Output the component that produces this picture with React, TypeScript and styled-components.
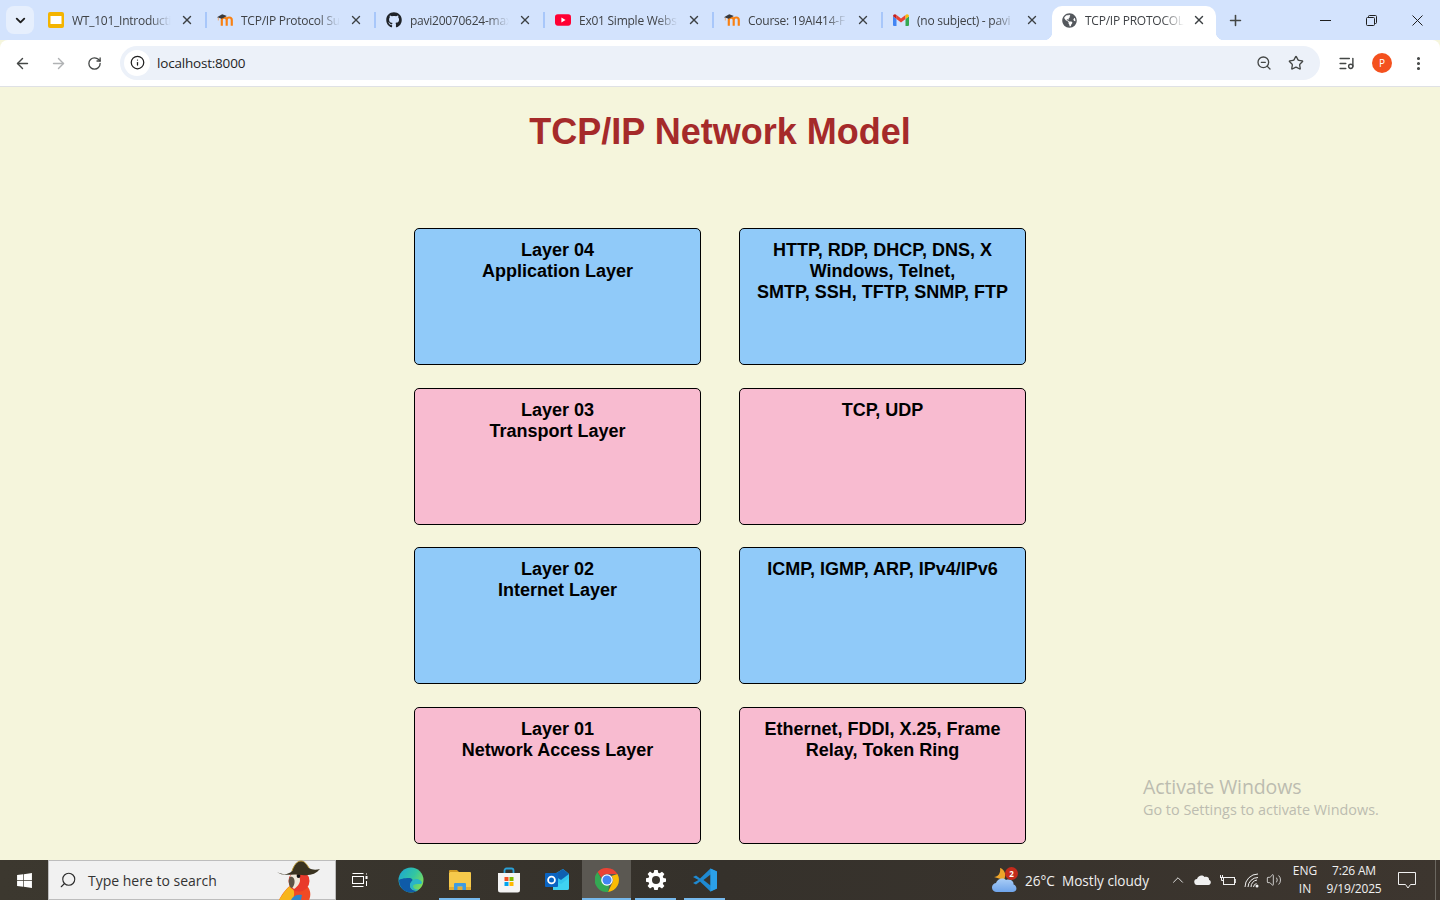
import styled, { createGlobalStyle } from "styled-components";
import {
  ArrowLeft, ArrowRight, ChevronDown, ChevronUp, Info, ListMusic, MoreVertical,
  Plus, RotateCw, Search, Star, Volume2, X, ZoomOut,
} from "lucide-react";
import { FaGithub, FaGlobeAmericas, FaWindows } from "react-icons/fa";
import { ReactNode } from "react";

const GlobalStyle = createGlobalStyle`
  html, body {
    margin: 0;
    padding: 0;
    height: 100%;
    overflow: hidden;
  }
`;

const Screen = styled.div`
  width: 1440px;
  height: 900px;
  display: flex;
  flex-direction: column;
  position: relative;
  overflow: hidden;
  font-family: "Open Sans", "Noto Sans", sans-serif;
  background: #f5f5dc;
`;

/* chrome tab strip */
const TabStrip = styled.div`
  height: 40px;
  flex: none;
  background: #d3e3fd;
  display: flex;
  align-items: flex-start;
  padding: 6px 0 0 6px;
  box-sizing: border-box;
`;

const TabSearch = styled.div`
  width: 28px;
  height: 28px;
  margin-right: 3px;
  border-radius: 8px;
  background: #e6effd;
  display: flex;
  align-items: center;
  justify-content: center;
  color: #1f1f1f;
  flex: none;
`;

const Tab = styled.div<{ $active?: boolean; $last?: boolean }>`
  width: ${(p) => (p.$active ? "164px" : "169px")};
  margin-left: ${(p) => (p.$active ? "1px" : "0")};
  height: 34px;
  flex: none;
  box-sizing: border-box;
  position: relative;
  display: flex;
  align-items: center;
  padding: 0 0 6px ${(p) => (p.$active ? "9px" : "11px")};
  background: ${(p) => (p.$active ? "#fff" : "transparent")};
  border-radius: 10px 10px 0 0;
  color: #3c4043;

  ${(p) =>
    !p.$active && !p.$last
      ? `&::after {
    content: "";
    position: absolute;
    right: -1px;
    top: 6px;
    width: 2px;
    height: 16px;
    background: #a8c7fa;
  }`
      : ""}

  ${(p) =>
    p.$active
      ? `&::before, &::after {
    content: "";
    position: absolute;
    bottom: 0;
    width: 8px;
    height: 8px;
  }
  &::before {
    left: -8px;
    background: radial-gradient(circle at 0 0, #d3e3fd 8px, #fff 8.5px);
  }
  &::after {
    right: -8px;
    background: radial-gradient(circle at 100% 0, #d3e3fd 8px, #fff 8.5px);
  }`
      : ""}
`;

const TabIcon = styled.span`
  width: 16px;
  height: 16px;
  flex: none;
  display: flex;
  align-items: center;
  justify-content: center;
`;

const TabTitle = styled.span`
  width: 99px;
  margin-left: 8px;
  font-size: 12px;
  letter-spacing: -0.25px;
  white-space: nowrap;
  overflow: hidden;
  color: #3f4246;
  -webkit-mask-image: linear-gradient(90deg, #000 78%, transparent 100%);
  mask-image: linear-gradient(90deg, #000 78%, transparent 100%);
`;

const TabClose = styled.span<{ $active?: boolean }>`
  margin-left: ${(p) => (p.$active ? "7px" : "8px")};
  width: 16px;
  height: 16px;
  flex: none;
  display: flex;
  align-items: center;
  justify-content: center;
  color: #3c4043;
`;

const NewTab = styled.div`
  width: 28px;
  height: 28px;
  margin-left: 5px;
  flex: none;
  display: flex;
  align-items: center;
  justify-content: center;
  color: #444746;
`;

const WindowButtons = styled.div`
  margin-left: auto;
  margin-top: -6px;
  display: flex;
  color: #1f1f1f;
`;

const WindowButton = styled.div`
  width: 46px;
  height: 40px;
  display: flex;
  align-items: center;
  justify-content: center;
`;

/* address bar */
const Toolbar = styled.div`
  height: 47px;
  flex: none;
  box-sizing: border-box;
  background: #fff;
  border-bottom: 1px solid #dfe1e5;
  border-radius: 8px 8px 0 0;
  display: flex;
  align-items: center;
  color: #444746;
`;

const ToolbarButton = styled.div<{ $muted?: boolean }>`
  width: 36px;
  height: 34px;
  flex: none;
  display: flex;
  align-items: center;
  justify-content: center;
  color: ${(p) => (p.$muted ? "#b0b2b4" : "#444746")};
`;

const NavGroup = styled.div`
  display: flex;
  padding-left: 4px;
  margin-right: 8px;
`;

const Omnibox = styled.div`
  width: 1200px;
  height: 34px;
  flex: none;
  border-radius: 17px;
  background: #ecf1f9;
  display: flex;
  align-items: center;
  padding: 0 8px 0 4px;
  box-sizing: border-box;
  margin-bottom: 1px;
`;

const InfoChip = styled.div`
  width: 26px;
  height: 26px;
  border-radius: 50%;
  background: #fff;
  display: flex;
  align-items: center;
  justify-content: center;
  color: #1f1f1f;
  flex: none;
`;

const UrlText = styled.span`
  margin-left: 7px;
  font-size: 13.5px;
  letter-spacing: -0.2px;
  color: #1f1f1f;
  flex: 1;
`;

const OmniAction = styled.div`
  width: 32px;
  height: 26px;
  display: flex;
  align-items: center;
  justify-content: center;
  color: #444746;
`;

const ProfileDot = styled.div`
  width: 20px;
  height: 20px;
  border-radius: 50%;
  background: #f4511e;
  color: #fff;
  font-size: 10px;
  display: flex;
  align-items: center;
  justify-content: center;
`;

const RightTools = styled.div`
  display: flex;
  margin-left: 8px;
`;

/* the page itself */
const Page = styled.main`
  flex: 1;
  min-height: 0;
  background: #f5f5dc;
  display: flex;
  flex-direction: column;
  align-items: center;
`;

const Title = styled.h1`
  margin: 24px 0 0;
  font-family: "Liberation Sans", Arial, sans-serif;
  font-size: 36px;
  line-height: 41px;
  font-weight: 700;
  color: #a52a2a;
`;

const LayerGrid = styled.div`
  margin-top: 76px;
  display: grid;
  grid-template-columns: 287px 287px;
  grid-auto-rows: 137px;
  column-gap: 38px;
  row-gap: 22.6px;
`;

const LayerBox = styled.div<{ $tone: "blue" | "pink" }>`
  box-sizing: border-box;
  border: 1px solid #000;
  border-radius: 5px;
  background: ${(p) => (p.$tone === "blue" ? "#90caf9" : "#f8bbd0")};
  padding: 11px 10px 10px;
  text-align: center;
  font-family: "Liberation Sans", Arial, sans-serif;
  font-size: 18px;
  font-weight: 700;
  line-height: 21px;
  color: #000;
`;

const Watermark = styled.div`
  position: absolute;
  left: 1143px;
  top: 774px;
  color: #bcbcb0;
  font-family: "Open Sans", sans-serif;
  pointer-events: none;
`;

const WatermarkTitle = styled.div`
  font-size: 19.5px;
  line-height: 25px;
  letter-spacing: -0.1px;
`;

const WatermarkText = styled.div`
  font-size: 14.4px;
  line-height: 22px;
`;

/* windows taskbar */
const Taskbar = styled.footer`
  height: 40px;
  flex: none;
  background: linear-gradient(90deg, #3c382f 0%, #35312b 50%, #3d362f 100%);
  display: flex;
  align-items: stretch;
  color: #f2f2f2;
`;

const StartButton = styled.div`
  width: 48px;
  flex: none;
  display: flex;
  align-items: center;
  justify-content: center;
  color: #fff;
`;

const SearchBox = styled.div`
  width: 288px;
  flex: none;
  box-sizing: border-box;
  background: #f1f1f1;
  border: 1px solid #bdbdbd;
  display: flex;
  align-items: center;
  padding-left: 10px;
  position: relative;
  color: #2b2b2b;
`;

const SearchText = styled.span`
  margin-left: 11px;
  font-size: 14px;
  color: #333;
`;

const Mascot = styled.svg`
  position: absolute;
  right: 14px;
  top: -1px;
`;

const TaskSlot = styled.div<{ $open?: boolean; $active?: boolean }>`
  width: 49px;
  flex: none;
  display: flex;
  align-items: center;
  justify-content: center;
  position: relative;
  background: ${(p) => (p.$active ? "#5b5852" : "transparent")};

  ${(p) =>
    p.$open
      ? `&::after {
    content: "";
    position: absolute;
    left: ${p.$active ? "0" : "4px"};
    right: ${p.$active ? "0" : "4px"};
    bottom: 0;
    height: 2px;
    background: #76b9ed;
  }`
      : ""}
`;

const TaskSlots = styled.div`
  display: flex;
  margin-left: 1px;
`;

const Tray = styled.div`
  margin-left: auto;
  display: flex;
  align-items: center;
  font-size: 13px;
  color: #f0f0f0;
  height: 100%;
`;

const WeatherIcon = styled.div`
  position: relative;
  width: 26px;
  height: 26px;
  flex: none;
  margin-right: 7px;
`;

const WeatherBadge = styled.span`
  position: absolute;
  right: 0;
  top: 0;
  width: 13px;
  height: 13px;
  border-radius: 50%;
  background: #c42b1c;
  color: #fff;
  font-size: 8px;
  line-height: 13px;
  text-align: center;
  font-weight: 700;
`;

const WeatherText = styled.span`
  white-space: pre;
  font-size: 13.6px;
`;

const TrayIcons = styled.div`
  display: flex;
  align-items: center;
  margin: 0 4px 0 19px;
  gap: 4.5px;
`;

const TrayIcon = styled.span`
  width: 20px;
  height: 20px;
  display: flex;
  align-items: center;
  justify-content: center;
  color: #f0f0f0;

  &:last-child {
    margin-left: -2px;
  }
`;

const LangBlock = styled.div`
  width: 34px;
  text-align: center;
  font-size: 12px;
  line-height: 18px;
`;

const ClockBlock = styled.div`
  width: 64px;
  text-align: center;
  font-size: 12px;
  line-height: 18px;
  letter-spacing: -0.2px;
`;

const NoticeButton = styled.div`
  width: 40px;
  margin: 0 8px 0 1px;
  height: 100%;
  display: flex;
  align-items: center;
  justify-content: center;
`;

const DesktopEdge = styled.div`
  width: 5px;
  box-sizing: border-box;
  height: 100%;
  flex: none;
  border-left: 1px solid #6b6760;
`;

/* small drawn logos */
const SlidesIcon = () => (
  <svg width="16" height="16" viewBox="0 0 16 16">
    <rect width="16" height="16" rx="2" fill="#f4b400" />
    <rect x="2.5" y="4" width="11" height="8" fill="#fff" />
  </svg>
);

const MoodleIcon = () => (
  <svg width="17" height="12" viewBox="0 0 17 12">
    <path
      d="M5.1 12V6a2.6 2.600 0 0 1 5.200 0V12M10.300 6a2.600 2.600 0 0 1 5.400 0V12"
      fill="none"
      stroke="#f98012"
      strokeWidth="2.300"
    />
    <path d="M0 3.200 5.500 0 10.500 1.800 5 4.800Z" fill="#3a3a3c" />
    <path d="M1.400 3.600V6.500" stroke="#f3a566" strokeWidth="1" />
  </svg>
);

const YoutubeIcon = () => (
  <svg width="17" height="12" viewBox="0 0 17 12">
    <rect width="17" height="12" rx="3" fill="#ff0033" />
    <path d="M6.800 3.400 11.200 6 6.800 8.600Z" fill="#fff" />
  </svg>
);

const GmailIcon = () => (
  <svg width="16" height="12" viewBox="0 0 16 12">
    <path d="M0 2.200V11a1 1 0 0 0 1 1h2.500V5Z" fill="#4285f4" />
    <path d="M16 2.200V11a1 1 0 0 1-1 1h-2.500V5Z" fill="#34a853" />
    <path d="M3.500 5V1L8 4.400 12.500 1v4L8 8.400Z" fill="#ea4335" />
    <path d="M0 2.200C0 .4 2-.6 3.500 1v4Z" fill="#c5221f" />
    <path d="M16 2.200c0-1.800-2-2.800-3.500-1.200v4Z" fill="#fbbc04" />
  </svg>
);

const Parrot = () => (
  <Mascot width="44" height="40" viewBox="0 0 44 40">
    <path d="M2 40C6 32 11 27 15 24L30 26C34 30 34 36 32 40Z" fill="#f04a25" />
    <path d="M2 40C6 33 10 28 14 25C18 30 18 36 15 40Z" fill="#f7b51d" />
    <path d="M14 40C16 36 20 34 25 35L24 40Z" fill="#2f86c9" />
    <circle cx="22" cy="21" r="10.500" fill="#e93a2b" />
    <path d="M15 13C20 13 23 16 23 20C23 24 20 27 17 29C13 26 11 18 15 13Z" fill="#efe8d9" />
    <path d="M13 17C16 16 18 19 17.500 23C17 26 15.500 28 14 28C11.500 25 11 20 13 17Z" fill="#5d5446" />
    <circle cx="21.500" cy="16" r="1.900" fill="#111" />
    <path
      d="M0 12C6 15 11 15 15 11C17 5 20 1 24 1C28 1 30 5 32 8C35 10 39 10 43 9C39 14 33 16 25 15C15 13 6 17 0 12Z"
      fill="#3a3320"
    />
    <path d="M15 11C17 5 20 1 24 1C28 1 30 5 32 8" fill="none" stroke="#b8952f" strokeWidth="1" />
  </Mascot>
);

const EdgeIcon = () => (
  <svg width="26" height="26" viewBox="0 0 26 26">
    <defs>
      <linearGradient id="edgeA" x1="0" y1="0" x2="1" y2="0.6">
        <stop offset="0" stopColor="#1aa3d8" />
        <stop offset="0.6" stopColor="#33c6a0" />
        <stop offset="1" stopColor="#7edb5a" />
      </linearGradient>
    </defs>
    <circle cx="13" cy="13" r="12.500" fill="url(#edgeA)" />
    <path d="M1 13C1 20 6 25.500 13 25.500c3 0 5-.8 7-2-4 .8-8-1-8-5 0-2 1-3 2-4 1.500-1.500 0-3.500-3-3.500C6 11 2 12 1 13Z" fill="#0f5ba8" />
    <path d="M12 18.500c0 3 3 5 7 5l2-1c-4 .5-6-1-6-3.500 0-1 1-2 4-2 2 0 4 .5 5-1 0-2-3-4-6-4-3 0-6 3-6 6.500Z" fill="#2ab4c8" />
  </svg>
);

const ExplorerIcon = () => (
  <svg width="24" height="22" viewBox="0 0 24 22">
    <path d="M1 2a1 1 0 0 1 1-1h7l2 2H1Z" fill="#d19a21" />
    <rect x="1" y="3" width="22" height="18" rx="1" fill="#f6c94b" />
    <rect x="1" y="18" width="22" height="3" fill="#e2ad35" />
    <path d="M6 21v-6a1 1 0 0 1 1-1h10a1 1 0 0 1 1 1v6h-3.500v-3.500h-5V21Z" fill="#3f9be0" />
  </svg>
);

const StoreIcon = () => (
  <svg width="24" height="26" viewBox="0 0 24 26">
    <path d="M7.500 7V3.500a2 2 0 0 1 2-2h5a2 2 0 0 1 2 2V7" fill="none" stroke="#2aa1d8" strokeWidth="1.800" />
    <path d="M1 6h22v17a2.500 2.500 0 0 1-2.500 2.500h-17A2.500 2.500 0 0 1 1 23Z" fill="#f4f4f4" />
    <rect x="7.500" y="10" width="4" height="4" fill="#f25022" />
    <rect x="12.500" y="10" width="4" height="4" fill="#7fba00" />
    <rect x="7.500" y="15" width="4" height="4" fill="#00a4ef" />
    <rect x="12.500" y="15" width="4" height="4" fill="#ffb900" />
  </svg>
);

const OutlookIcon = () => (
  <svg width="25" height="24" viewBox="0 0 25 24">
    <path d="M8 7 18 1l6 5v14a2 2 0 0 1-2 2H8Z" fill="#33c5ee" />
    <path d="M8 7 18 1l6 5-8 6Z" fill="#0f5fb0" />
    <path d="M8 22V11l8 5 8-6v10a2 2 0 0 1-2 2Z" fill="#3fd2f2" />
    <rect x="0" y="5" width="13" height="14" rx="1" fill="#0a64c2" />
    <circle cx="6.500" cy="12" r="3.400" fill="none" stroke="#fff" strokeWidth="1.800" />
  </svg>
);

const ChromeIcon = () => (
  <svg width="24" height="24" viewBox="0 0 24 24">
    <path d="M12 0a12 12 0 0 1 10.400 6H12a6 6 0 0 0-5.600 3.800L2.600 4.100A12 12 0 0 1 12 0Z" fill="#ea4335" />
    <path d="M22.400 6A12 12 0 0 1 13 23.900l4.200-8.900A6 6 0 0 0 16.500 8l5.900-2Z" fill="#fbbc04" />
    <path d="M13 23.900A12 12 0 0 1 2.600 4.100l4.900 8.900a6 6 0 0 0 6.700 3.900Z" fill="#34a853" />
    <circle cx="12" cy="12" r="5.800" fill="#fff" />
    <circle cx="12" cy="12" r="4.500" fill="#4285f4" />
  </svg>
);

const GearIcon = () => (
  <svg width="20" height="20" viewBox="0 0 20 20">
    <path
      d="M8.300 0h3.400l.5 2.700 1.500.6 2.300-1.600 2.400 2.400-1.600 2.300.6 1.500 2.700.5v3.400l-2.700.5-.6 1.500 1.600 2.300-2.400 2.400-2.300-1.600-1.500.6-.5 2.700H8.300l-.5-2.700-1.500-.6L4 18.500l-2.400-2.400 1.600-2.300-.6-1.500L-.1 11.700V8.300l2.700-.5.6-1.500L1.600 4 4 1.600l2.300 1.600 1.500-.6Z"
      fill="#fff"
    />
    <circle cx="10" cy="10" r="4" fill="#38342e" />
  </svg>
);

const VscodeIcon = () => (
  <svg width="24" height="24" viewBox="0 0 24 24">
    <path d="M17.500.5 24 3.500v17l-6.500 3L7 13.500l-4 3L0 15l5.500-3L0 9l3-1.500 4 3Z" fill="#1f8ad2" />
    <path d="M17.500 6.500 10.500 12l7 5.500Z" fill="#38342e" />
    <path d="M17.500.5 24 3.500v17l-6.500 3Z" fill="#2ba0e8" />
  </svg>
);

const TaskViewGlyph = styled.svg`
  margin-right: 3px;
`;

const TaskViewIcon = () => (
  <TaskViewGlyph width="16" height="14" viewBox="0 0 16 14" fill="none" stroke="#fff" strokeWidth="1">
    <path d="M.5 .5h11M.5 13.500h11" />
    <rect x=".5" y="3.500" width="11" height="7" />
    <rect x="13.500" y="3" width="2" height="3" fill="#fff" stroke="none" />
    <path d="M14.500 .5v1M14.500 8v5" />
  </TaskViewGlyph>
);

const WeatherCloud = () => (
  <svg width="26" height="26" viewBox="0 0 26 26">
    <defs>
      <linearGradient id="cloudFill" x1="0" y1="0" x2="0" y2="1">
        <stop offset="0" stopColor="#a9cdf6" />
        <stop offset="1" stopColor="#6fa4ea" />
      </linearGradient>
    </defs>
    <path d="M2 10C6 10 9 6 8 1C12 2 15 7 12 13Z" fill="#eda42a" />
    <path
      d="M5 25A4.500 4.500 0 0 1 4 16C5 12 11 10 14 13C18 11.500 22 14 21.500 17.500C25 18 26 25 21 25Z"
      fill="url(#cloudFill)"
    />
  </svg>
);

const OneDriveIcon = () => (
  <svg width="17" height="10" viewBox="0 0 17 10">
    <path d="M3.500 10a3 3 0 0 1-.5-6C4 1 8-1 10.500 2c3-1 5 1 4.500 3 2.500 0 2.500 5-.5 5Z" fill="#f0f0f0" />
  </svg>
);

const PowerIcon = () => (
  <svg width="17" height="13" viewBox="0 0 17 13" fill="none" stroke="#f0f0f0" strokeWidth="1">
    <rect x="4.500" y="3.500" width="11" height="7" />
    <path d="M15.500 5.500h1.200v3h-1.200" />
    <path d="M1 3.500h3M1.500 1v2.500M3.500 1v2.500M2.500 3.500v3h2" />
  </svg>
);

const WifiIcon = () => (
  <svg width="16" height="15" viewBox="0 0 16 15" fill="none" stroke="#f0f0f0" strokeWidth="1">
    <path d="M1 14A13 13 0 0 1 14 1" />
    <path d="M4 14A10 10 0 0 1 14 4.500" />
    <path d="M7 14a7 7 0 0 1 6-7" />
    <path d="M9.500 14a4 4 0 0 1 3-3.500" />
    <circle cx="13" cy="13" r="1.500" fill="#f0f0f0" stroke="none" />
  </svg>
);

const NoticeIcon = () => (
  <svg width="18" height="17" viewBox="0 0 18 17" fill="none" stroke="#f0f0f0" strokeWidth="1">
    <path d="M.5 .5h17v12h-5L10 16l-2.500-3.500h-7Z" />
  </svg>
);

const tabs: { title: string; icon: ReactNode }[] = [
  { title: "WT_101_Introducti", icon: <SlidesIcon /> },
  { title: "TCP/IP Protocol Su", icon: <MoodleIcon /> },
  { title: "pavi20070624-max", icon: <FaGithub size={16} color="#1f2328" /> },
  { title: "Ex01 Simple Webs", icon: <YoutubeIcon /> },
  { title: "Course: 19AI414-F", icon: <MoodleIcon /> },
  { title: "(no subject) - pavi", icon: <GmailIcon /> },
];

const layers: { tone: "blue" | "pink"; lines: string[] }[] = [
  { tone: "blue", lines: ["Layer 04", "Application Layer"] },
  { tone: "blue", lines: ["HTTP, RDP, DHCP, DNS, X Windows, Telnet,", "SMTP, SSH, TFTP, SNMP, FTP"] },
  { tone: "pink", lines: ["Layer 03", "Transport Layer"] },
  { tone: "pink", lines: ["TCP, UDP"] },
  { tone: "blue", lines: ["Layer 02", "Internet Layer"] },
  { tone: "blue", lines: ["ICMP, IGMP, ARP, IPv4/IPv6"] },
  { tone: "pink", lines: ["Layer 01", "Network Access Layer"] },
  { tone: "pink", lines: ["Ethernet, FDDI, X.25, Frame Relay, Token Ring"] },
];

export default function App() {
  return (
    <Screen>
      <GlobalStyle />
      <TabStrip>
        <TabSearch>
          <ChevronDown size={15} strokeWidth={3} />
        </TabSearch>
        {tabs.map((tab, i) => (
          <Tab key={tab.title} $last={i === tabs.length - 1}>
            <TabIcon>{tab.icon}</TabIcon>
            <TabTitle>{tab.title}</TabTitle>
            <TabClose>
              <X size={14} strokeWidth={2.4} />
            </TabClose>
          </Tab>
        ))}
        <Tab $active>
          <TabIcon>
            <FaGlobeAmericas size={15} color="#54585d" />
          </TabIcon>
          <TabTitle>TCP/IP PROTOCOL</TabTitle>
          <TabClose $active>
            <X size={14} strokeWidth={2.4} />
          </TabClose>
        </Tab>
        <NewTab>
          <Plus size={17} strokeWidth={2.2} />
        </NewTab>
        <WindowButtons>
          <WindowButton>
            <svg width="11" height="1" viewBox="0 0 11 1">
              <rect width="11" height="1" fill="#1f1f1f" />
            </svg>
          </WindowButton>
          <WindowButton>
            <svg width="11" height="11" viewBox="0 0 11 11" fill="none" stroke="#1f1f1f">
              <rect x=".5" y="2.500" width="8" height="8" rx="1" />
              <path d="M2.500 2.500v-1a1 1 0 0 1 1-1h6a1 1 0 0 1 1 1v6a1 1 0 0 1-1 1h-1" />
            </svg>
          </WindowButton>
          <WindowButton>
            <svg width="11" height="11" viewBox="0 0 11 11" fill="none" stroke="#1f1f1f">
              <path d="M.5 .5 10.500 10.500M10.500 .5 .5 10.500" />
            </svg>
          </WindowButton>
        </WindowButtons>
      </TabStrip>

      <Toolbar>
        <NavGroup>
          <ToolbarButton>
            <ArrowLeft size={17} strokeWidth={2} />
          </ToolbarButton>
          <ToolbarButton $muted>
            <ArrowRight size={17} strokeWidth={2} />
          </ToolbarButton>
          <ToolbarButton>
            <RotateCw size={15} strokeWidth={2.1} />
          </ToolbarButton>
        </NavGroup>
        <Omnibox>
          <InfoChip>
            <Info size={15} strokeWidth={2} />
          </InfoChip>
          <UrlText>localhost:8000</UrlText>
          <OmniAction>
            <ZoomOut size={16} strokeWidth={2} />
          </OmniAction>
          <OmniAction>
            <Star size={16} strokeWidth={2} />
          </OmniAction>
        </Omnibox>
        <RightTools>
          <ToolbarButton>
            <ListMusic size={17} strokeWidth={2} />
          </ToolbarButton>
          <ToolbarButton>
            <ProfileDot>P</ProfileDot>
          </ToolbarButton>
          <ToolbarButton>
            <MoreVertical size={17} strokeWidth={2.4} />
          </ToolbarButton>
        </RightTools>
      </Toolbar>

      <Page>
        <Title>TCP/IP Network Model</Title>
        <LayerGrid>
          {layers.map((layer) => (
            <LayerBox key={layer.lines[0]} $tone={layer.tone}>
              {layer.lines.map((line) => (
                <div key={line}>{line}</div>
              ))}
            </LayerBox>
          ))}
        </LayerGrid>
      </Page>

      <Watermark>
        <WatermarkTitle>Activate Windows</WatermarkTitle>
        <WatermarkText>Go to Settings to activate Windows.</WatermarkText>
      </Watermark>

      <Taskbar>
        <StartButton>
          <FaWindows size={17} />
        </StartButton>
        <SearchBox>
          <Search size={18} strokeWidth={1.5} transform="scale(-1,1)" />
          <SearchText>Type here to search</SearchText>
          <Parrot />
        </SearchBox>
        <TaskSlots>
          <TaskSlot>
            <TaskViewIcon />
          </TaskSlot>
          <TaskSlot>
            <EdgeIcon />
          </TaskSlot>
          <TaskSlot $open>
            <ExplorerIcon />
          </TaskSlot>
          <TaskSlot>
            <StoreIcon />
          </TaskSlot>
          <TaskSlot>
            <OutlookIcon />
          </TaskSlot>
          <TaskSlot $open $active>
            <ChromeIcon />
          </TaskSlot>
          <TaskSlot $open>
            <GearIcon />
          </TaskSlot>
          <TaskSlot $open>
            <VscodeIcon />
          </TaskSlot>
        </TaskSlots>
        <Tray>
          <WeatherIcon>
            <WeatherCloud />
            <WeatherBadge>2</WeatherBadge>
          </WeatherIcon>
          <WeatherText>26°C  Mostly cloudy</WeatherText>
          <TrayIcons>
            <TrayIcon>
              <ChevronUp size={18} strokeWidth={1.2} />
            </TrayIcon>
            <TrayIcon>
              <OneDriveIcon />
            </TrayIcon>
            <TrayIcon>
              <PowerIcon />
            </TrayIcon>
            <TrayIcon>
              <WifiIcon />
            </TrayIcon>
            <TrayIcon>
              <Volume2 size={16} strokeWidth={1.2} />
            </TrayIcon>
          </TrayIcons>
          <LangBlock>
            ENG
            <br />
            IN
          </LangBlock>
          <ClockBlock>
            7:26 AM
            <br />
            9/19/2025
          </ClockBlock>
          <NoticeButton>
            <NoticeIcon />
          </NoticeButton>
          <DesktopEdge />
        </Tray>
      </Taskbar>
    </Screen>
  );
}
